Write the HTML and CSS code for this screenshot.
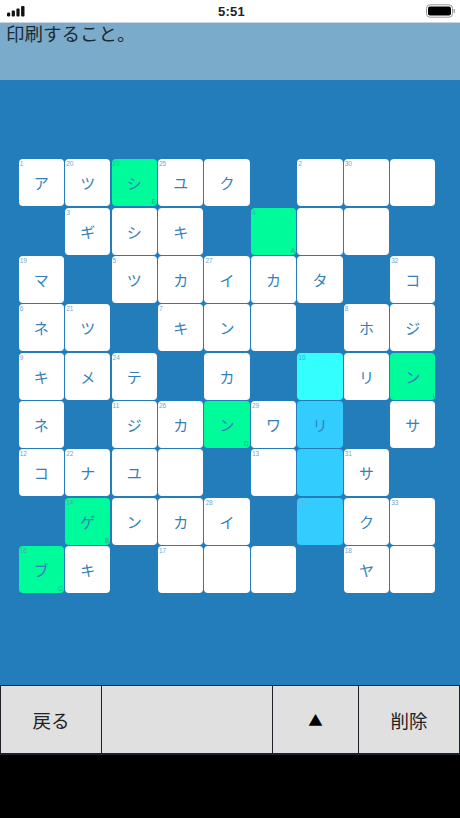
FILE: index.html
```html
<!DOCTYPE html>
<html lang="ja">
<head>
<meta charset="utf-8">
<title>クロスワード</title>
<link rel="stylesheet" href="styles.css">
</head>
<body>
<div class="status">
  <svg class="signal" width="18" height="11" viewBox="0 0 18 11"><rect x="0" y="6.5" width="3.2" height="4" rx="1.2"/><rect x="4.7" y="4.5" width="3.2" height="6" rx="1"/><rect x="9.4" y="2.5" width="3.2" height="8" rx="1"/><rect x="14.1" y="0" width="3.4" height="10.5" rx="1"/></svg>
  <span class="time">5:51</span>
  <svg class="battery" width="29" height="14" viewBox="0 0 29 14"><rect x="0.5" y="0.8" width="26" height="12.4" rx="3.5" fill="none" stroke="#999"/><rect x="2" y="2.5" width="23" height="9" rx="2" fill="#000"/><rect x="27.5" y="5" width="1.2" height="4" fill="#999"/></svg>
</div>
<div class="hint">印刷すること。</div>
<main class="board">
  <div class="grid">
    <div class="cell"><i>1</i>ア</div><div class="cell"><i>20</i>ツ</div><div class="cell green"><i>23</i>シ<b>E</b></div><div class="cell"><i>25</i>ユ</div><div class="cell">ク</div><div class="void"></div><div class="cell"><i>2</i></div><div class="cell"><i>30</i></div><div class="cell"></div>
    <div class="void"></div><div class="cell"><i>3</i>ギ</div><div class="cell">シ</div><div class="cell">キ</div><div class="void"></div><div class="cell green"><i>4</i><b>A</b></div><div class="cell"></div><div class="cell"></div><div class="void"></div>
    <div class="cell"><i>19</i>マ</div><div class="void"></div><div class="cell"><i>5</i>ツ</div><div class="cell">カ</div><div class="cell"><i>27</i>イ</div><div class="cell">カ</div><div class="cell">タ</div><div class="void"></div><div class="cell"><i>32</i>コ</div>
    <div class="cell"><i>6</i>ネ</div><div class="cell"><i>21</i>ツ</div><div class="void"></div><div class="cell"><i>7</i>キ</div><div class="cell">ン</div><div class="cell"></div><div class="void"></div><div class="cell"><i>8</i>ホ</div><div class="cell">ジ</div>
    <div class="cell"><i>9</i>キ</div><div class="cell">メ</div><div class="cell"><i>24</i>テ</div><div class="void"></div><div class="cell">カ</div><div class="void"></div><div class="cell cyan"><i>10</i></div><div class="cell">リ</div><div class="cell green">ン<b>I</b></div>
    <div class="cell">ネ</div><div class="void"></div><div class="cell"><i>11</i>ジ</div><div class="cell"><i>26</i>カ</div><div class="cell green">ン<b>D</b></div><div class="cell"><i>29</i>ワ</div><div class="cell blue">リ</div><div class="void"></div><div class="cell">サ</div>
    <div class="cell"><i>12</i>コ</div><div class="cell"><i>22</i>ナ</div><div class="cell">ユ</div><div class="cell"></div><div class="void"></div><div class="cell"><i>13</i></div><div class="cell blue"></div><div class="cell"><i>31</i>サ</div><div class="void"></div>
    <div class="void"></div><div class="cell green"><i>14</i>ゲ<b>B</b></div><div class="cell">ン</div><div class="cell">カ</div><div class="cell"><i>28</i>イ</div><div class="void"></div><div class="cell blue"><i>15</i></div><div class="cell">ク</div><div class="cell"><i>33</i></div>
    <div class="cell green"><i>16</i>ブ<b>C</b></div><div class="cell">キ</div><div class="void"></div><div class="cell"><i>17</i></div><div class="cell"></div><div class="cell"></div><div class="void"></div><div class="cell"><i>18</i>ヤ</div><div class="cell"></div>
  </div>
</main>
<div class="buttons">
  <div class="btn back">戻る</div>
  <div class="btn wide"></div>
  <div class="btn up">▲</div>
  <div class="btn del">削除</div>
</div>
<div class="footer"></div>
</body>
</html>
```
FILE: styles.css
```css
* { box-sizing: border-box; }
html, body { margin: 0; padding: 0; }
body {
  width: 460px;
  height: 818px;
  overflow: hidden;
  display: flex;
  flex-direction: column;
  background: #000;
  font-family: "Noto Sans CJK JP", "Liberation Sans", sans-serif;
}
.status {
  height: 23px;
  flex: none;
  background: #fff;
  border-bottom: 1px solid #c9d6e0;
  display: flex;
  align-items: center;
  justify-content: space-between;
  padding: 0 5px 0 7px;
  position: relative;
}
.signal { fill: #111; margin-top: 1px; }
.time {
  position: absolute;
  left: 3px;
  right: 0;
  text-align: center;
  font: 700 13px "Liberation Sans", sans-serif;
  color: #222;
  letter-spacing: 0.3px;
}
.hint {
  height: 57px;
  flex: none;
  background: #7aabcb;
  color: #1d2a33;
  font-size: 18.5px;
  line-height: 20px;
  padding: 0 0 0 6px;
}
.board {
  flex: none;
  height: 605px;
  background: #247dbb;
  padding: 79.3px 23px 0 18.7px;
}
.grid {
  display: grid;
  grid-template-columns: repeat(9, 45.3px);
  grid-auto-rows: 47.2px;
  column-gap: 1.15px;
  row-gap: 1.15px;
}
.cell {
  position: relative;
  background: #fff;
  border-radius: 4px;
  color: #3580b8;
  font-size: 15px;
  display: flex;
  align-items: center;
  justify-content: center;
}
.cell i {
  position: absolute;
  left: 1px;
  top: 1px;
  font: normal 6.5px/7px "Liberation Sans", sans-serif;
  color: #6fa6cf;
}
.cell b {
  position: absolute;
  right: 1px;
  bottom: 1px;
  font: normal 6.5px/7px "Liberation Sans", sans-serif;
  color: #3a9fa0;
}
.green { background: #00fb9b; }
.green i { color: #3fb5a5; }
.cyan { background: #33ffff; }
.cyan i { color: #3fa5c5; }
.blue { background: #33ccff; }
.blue i { color: #6fb5d8; }
.buttons {
  flex: none;
  height: 70px;
  display: flex;
  background: #1c2228;
  gap: 1px;
  padding: 1px;
}
.btn {
  background: #e0e0e0;
  color: #222;
  font-size: 18.5px;
  display: flex;
  align-items: center;
  justify-content: center;
  height: 67px;
}
.back { width: 100px; }
.wide { width: 170px; }
.up { width: 85px; font-size: 14.5px; color: #000; }
.del { width: 100px; }
.footer { flex: 1; background: #000; }
```
